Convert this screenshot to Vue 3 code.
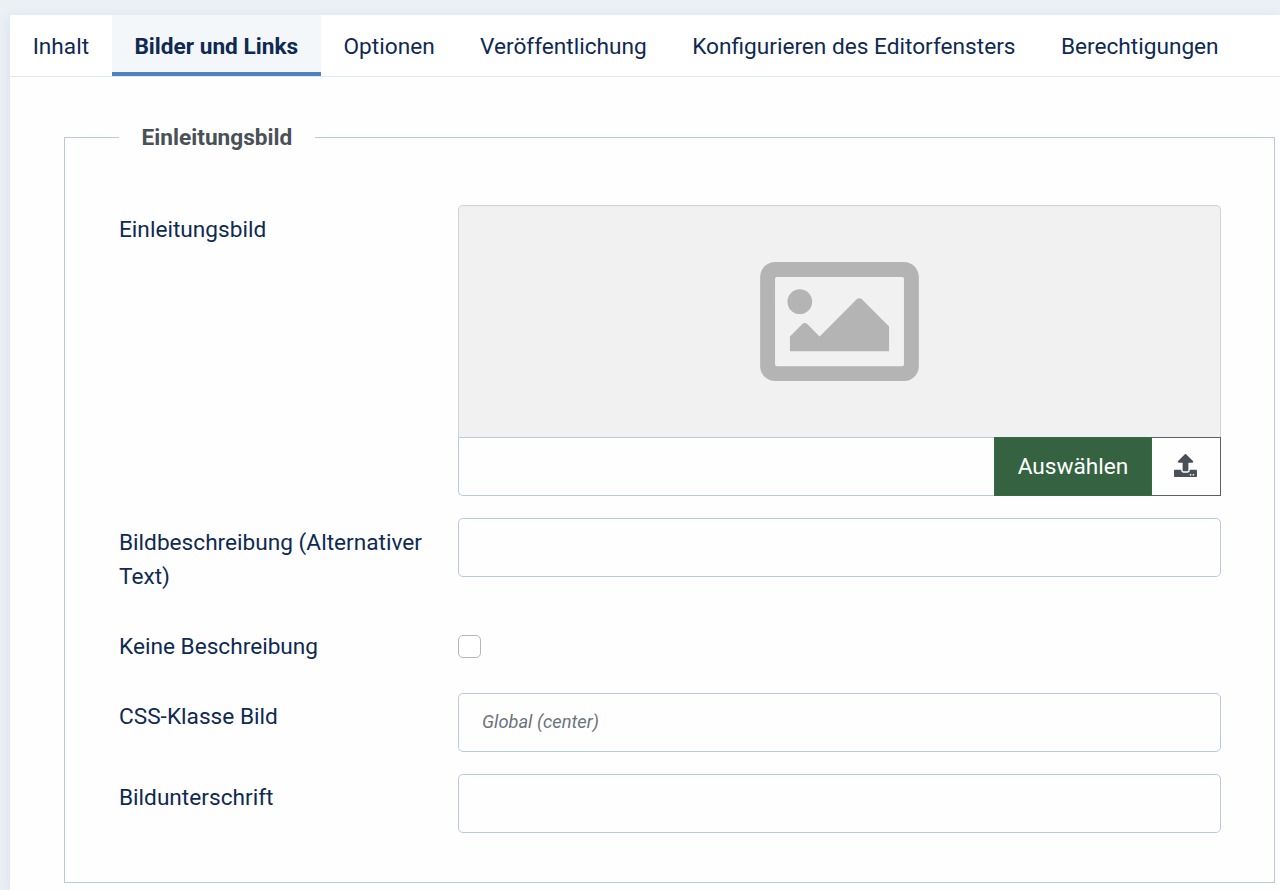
<template>
  <div class="panel">
    <nav class="tabs">
      <button
        v-for="tab in tabs"
        :key="tab"
        type="button"
        class="tab"
        :class="{ active: tab === activeTab }"
        @click="activeTab = tab"
      >
        {{ tab }}
      </button>
    </nav>

    <fieldset class="options">
      <legend>Einleitungsbild</legend>

      <div class="row">
        <label for="image">Einleitungsbild</label>
        <div class="control">
          <div class="preview">
            <svg viewBox="0 64 512 384" fill="currentColor">
              <path
                d="M464 64H48C21.49 64 0 85.49 0 112v288c0 26.51 21.49 48 48 48h416c26.51 0 48-21.49 48-48V112c0-26.51-21.49-48-48-48zm-6 336H54a6 6 0 0 1-6-6V118a6 6 0 0 1 6-6h404a6 6 0 0 1 6 6v276a6 6 0 0 1-6 6zM128 152c-22.091 0-40 17.909-40 40s17.909 40 40 40 40-17.909 40-40-17.909-40-40-40zM96 352h320v-80l-87.515-87.515c-4.686-4.686-12.284-4.686-16.971 0L192 304l-39.515-39.515c-4.686-4.686-12.284-4.686-16.971 0L96 304v48z"
              />
            </svg>
          </div>
          <div class="input-group">
            <input id="image" v-model="form.image" type="text" />
            <button type="button" class="btn-select">Auswählen</button>
            <button type="button" class="btn-upload">
              <svg viewBox="0 0 512 512" fill="currentColor">
                <path
                  d="M296 384h-80c-13.3 0-24-10.7-24-24V192h-87.7c-17.8 0-26.7-21.5-14.1-34.1L242.3 5.7c7.5-7.5 19.8-7.5 27.3 0l152.2 152.2c12.6 12.6 3.7 34.1-14.1 34.1H320v168c0 13.3-10.7 24-24 24zm216-8v112c0 13.3-10.7 24-24 24H24c-13.3 0-24-10.7-24-24V376c0-13.3 10.7-24 24-24h136v8c0 30.9 25.1 56 56 56h80c30.9 0 56-25.1 56-56v-8h136c13.3 0 24 10.7 24 24zm-124 88c0-11-9-20-20-20s-20 9-20 20 9 20 20 20 20-9 20-20zm64 0c0-11-9-20-20-20s-20 9-20 20 9 20 20 20 20-9 20-20z"
                />
              </svg>
            </button>
          </div>
        </div>
      </div>

      <div class="row">
        <label for="alt">Bildbeschreibung (Alternativer Text)</label>
        <div class="control">
          <input id="alt" v-model="form.alt" type="text" />
        </div>
      </div>

      <div class="row check-row">
        <label for="altEmpty">Keine Beschreibung</label>
        <div class="control check">
          <input id="altEmpty" v-model="form.altEmpty" type="checkbox" />
        </div>
      </div>

      <div class="row single">
        <label for="cssClass">CSS-Klasse Bild</label>
        <div class="control">
          <input
            id="cssClass"
            v-model="form.cssClass"
            type="text"
            placeholder="Global (center)"
          />
        </div>
      </div>

      <div class="row single">
        <label for="caption">Bildunterschrift</label>
        <div class="control">
          <input id="caption" v-model="form.caption" type="text" />
        </div>
      </div>
    </fieldset>
  </div>
</template>

<script setup>
import { reactive, ref } from "vue";

const tabs = [
  "Inhalt",
  "Bilder und Links",
  "Optionen",
  "Veröffentlichung",
  "Konfigurieren des Editorfensters",
  "Berechtigungen",
];

const activeTab = ref("Bilder und Links");

const form = reactive({
  image: "",
  alt: "",
  altEmpty: false,
  cssClass: "",
  caption: "",
});
</script>

<style>
body {
  margin: 0;
  background-color: #ebf0f5;
}
</style>

<style scoped>
* {
  box-sizing: border-box;
}

.panel {
  height: 875px;
  margin: 15px 0 0 10px;
  background-color: #fefefe;
  box-shadow: 0 3px 12px rgba(40, 80, 150, 0.1);
  color: #0f2a52;
  font-family: Roboto, "Liberation Sans", sans-serif;
  font-size: 22.65px;
  line-height: 34px;
}

button,
input {
  margin: 0;
  font: inherit;
  color: inherit;
}

.tabs {
  display: flex;
  height: 62px;
  background-color: #fff;
  border-bottom: 1px solid #dfe7f2;
}

.tab {
  height: 61px;
  padding: 2px 22.7px 0;
  border: none;
  background: none;
  white-space: nowrap;
}

.tab.active {
  background-color: #f3f7fa;
  box-shadow: inset 0 -4px 0 #4f80c2;
  font-weight: bold;
}

.options {
  width: 1211px;
  height: 763px;
  margin: 43px 0 0 54px;
  padding: 50px 54px 0;
  border: 1px solid #b9cae0;
}

legend {
  padding: 1px 22.6px 0;
  color: #495057;
  font-weight: bold;
}

.row {
  display: flex;
  margin-bottom: 22px;
}

.row label {
  width: 339px;
  padding: 8px 22px 6px 0;
}

.check-row {
  margin-bottom: 23px;
}

.single label {
  padding-top: 7px;
}

.control {
  flex: 1;
  min-width: 0;
  margin-right: -1px;
}

.check {
  display: flex;
  align-items: center;
}

.preview {
  display: flex;
  align-items: center;
  justify-content: center;
  height: 232px;
  border: 1px solid #d0d3d6;
  border-bottom: none;
  border-radius: 5px 5px 0 0;
  background-color: #f1f1f1;
  color: #b4b4b4;
}

.preview svg {
  width: 159px;
  height: 119px;
}

input[type="text"] {
  display: block;
  width: 100%;
  height: 59px;
  padding: 0 22.6px;
  border: 1px solid #b9cae0;
  border-radius: 5px;
  background-color: #fefefe;
  outline: none;
}

.single input[type="text"] {
  padding: 0 22.6px 5px 23px;
}

input::placeholder {
  color: #6b737b;
  font-size: 18.3px;
  font-style: italic;
  opacity: 1;
}

input[type="checkbox"] {
  appearance: none;
  width: 23px;
  height: 23px;
  border: 1px solid #b6b6b6;
  border-radius: 5px;
  background-color: #fff;
}

input[type="checkbox"]:checked {
  background-color: #132f53;
}

.input-group {
  display: flex;
}

.input-group input[type="text"] {
  flex: 1;
  width: auto;
  min-width: 0;
  border-right: none;
  border-radius: 0 0 0 5px;
}

.btn-select {
  width: 158px;
  padding: 0;
  border: 1px solid #2f6e43;
  background-color: #356342;
  color: #fff;
}

.btn-upload {
  display: flex;
  align-items: center;
  justify-content: center;
  width: 69px;
  padding: 0 1px 2px 0;
  border: 1px solid #5a6068;
  border-left: none;
  background-color: #fefefe;
  color: #495057;
}

.btn-upload svg {
  width: 23px;
  height: 23px;
}
</style>
